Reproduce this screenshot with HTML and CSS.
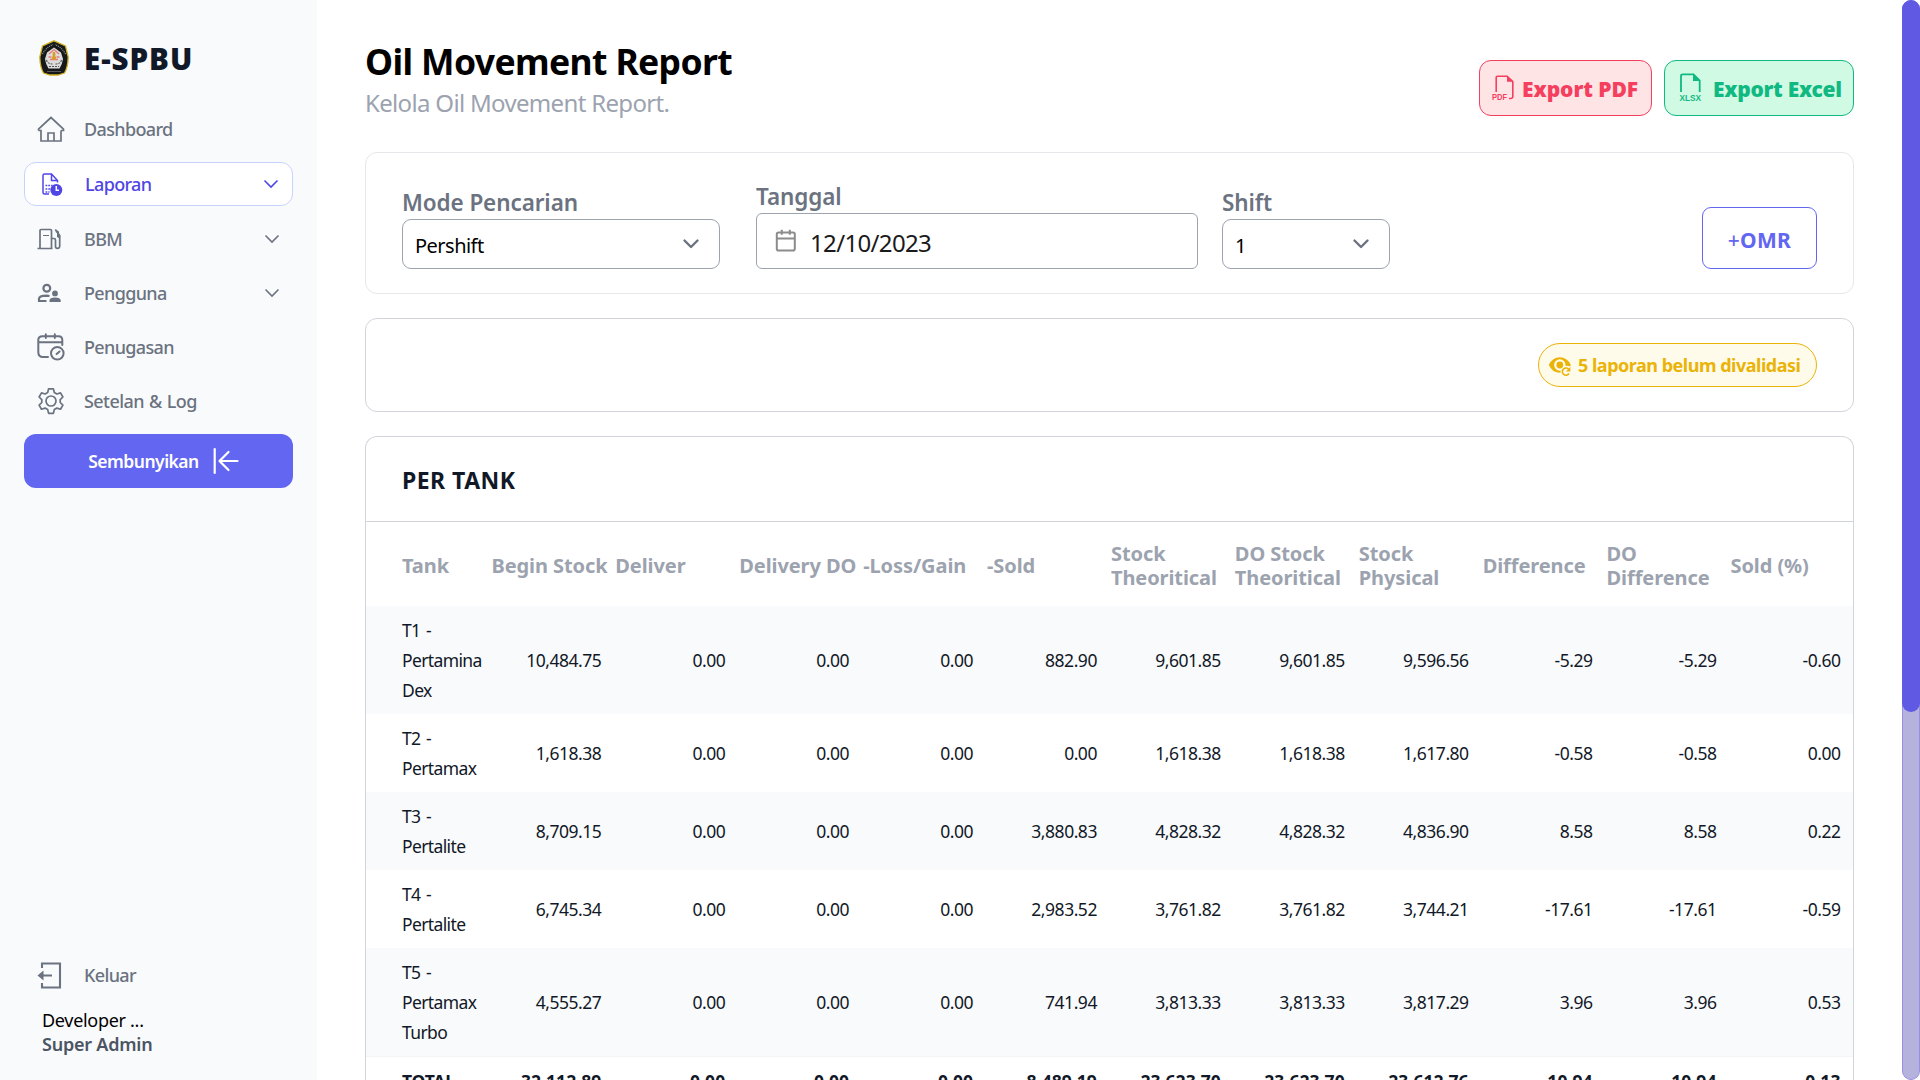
FILE: index.html
```
<!DOCTYPE html>
<html lang="id">
<head>
<meta charset="utf-8">
<title>Oil Movement Report</title>
<link rel="stylesheet" href="styles.css">
</head>
<body>
<aside class="sidebar">
  <div class="brand">
    <svg class="logo" width="30" height="36" viewBox="0 0 30 36"><path d="M15 .8 26.500 6 29.200 17Q29 27 25.500 33L19 35H11L4.500 33Q1 27 .8 17L3.500 6Z" fill="#17181a" stroke="#d0b022" stroke-width="1.300"/><path d="M15 7.500 22 12.500 24 19Q23 25 20.500 28.500H9.500Q7 25 6 19L8 12.500Z" fill="#dcdcdc"/><path d="M10 14 15 9.500 20 14M9.500 17h3M17.500 17h3M11 19.500h8" stroke="#e57d76" stroke-width="1.300" fill="none"/><path d="M15 12v8M13 18h4" stroke="#d89d28" stroke-width="2.600"/><path d="M7.500 20q1 4 6 4M22.500 20q-1 4-6 4M10 26.500h10" stroke="#555" stroke-width="1.100" fill="none" stroke-dasharray="2 1"/><path d="M3.500 14Q7 7.500 14 4.500M26.500 14Q23 7.500 16 4.500M8.500 31.500h13" stroke="#999" stroke-width="1.200" stroke-dasharray="1 1" fill="none"/></svg>
    <span class="brand-name">E-SPBU</span>
  </div>
  <nav class="menu">
    <a class="item"><svg class="ico" viewBox="0 0 30 30"><path d="M2.500 16.500V15L15 3.500 27.500 15v1.500h-2.500M2.500 16.500H5V27H25V16.500M12 27v-8h6v8"/></svg><span>Dashboard</span></a>
    <a class="item active"><svg class="ico" viewBox="0 0 30 30"><path d="M13 25H8.500Q7 25 7 23.500V6.500Q7 5 8.500 5H15.500L21.500 11.500V13.500M15.500 5v6.500h6" stroke-width="1.500"/><path d="M9.500 16.500h7M9.500 20h5M9.500 23h4" stroke-dasharray="1.800 1"/><circle cx="20.300" cy="21" r="6" class="solid"/><path d="M20.300 17v4.300H23" class="knock"/></svg><span>Laporan</span><svg class="chev" viewBox="0 0 16 10"><path d="M1.500 1.500 8 8l6.500-6.500"/></svg></a>
    <a class="item"><svg class="ico" viewBox="0 0 30 30"><path d="M1.500 24.500h15M4 24.500V6.500Q4 5.500 5 5.500H14.500Q15.500 5.500 15.500 6.500V24.500M15.500 14.500H18Q19.500 14.500 19.500 16V22.500Q19.500 24.300 21.500 24.300T23.700 22.500V11.500L19.300 5.500"/><path d="M7 11.500h6" stroke-width="1"/><path d="M20 7 22 8V12.500L24 13.500" stroke-width="2"/></svg><span>BBM</span><svg class="chev" viewBox="0 0 16 10"><path d="M1.500 1.500 8 8l6.500-6.500"/></svg></a>
    <a class="item"><svg class="ico" viewBox="0 0 30 30"><circle cx="10.800" cy="10.300" r="3.400" stroke-width="2.200"/><path d="M10.500 23H3V20.800Q3 17.600 10.800 17.600L13.500 18" stroke-width="2.200"/><circle cx="19" cy="15.400" r="2.900" class="solid"/><path d="M13.500 24V22.500Q13.500 19.500 19 19.500T24.700 22.500V24Z" class="solid"/></svg><span>Pengguna</span><svg class="chev" viewBox="0 0 16 10"><path d="M1.500 1.500 8 8l6.500-6.500"/></svg></a>
    <a class="item"><svg class="ico" viewBox="0 0 30 30"><g stroke-width="2" stroke-linecap="round"><path d="M12 25H7Q2.300 25 2.300 20V8Q2.300 4.200 6.500 4.200H22.500Q26.300 4.200 26.300 8V13M2.300 10.300H26M9.800 2.300V6M18.800 2.300V6"/><circle cx="21.300" cy="21.300" r="6.300"/><path d="M20.600 22 23.600 19.500"/></g></svg><span>Penugasan</span></a>
    <a class="item wide"><svg class="ico" viewBox="0 0 30 30"><circle cx="15" cy="15" r="5"/><path d="M12.600 2.800h4.800l.9 3.700 2.600 1.500 3.600-1.100 2.400 4.100-2.700 2.600v2.900l2.700 2.600-2.400 4.100-3.600-1.100-2.600 1.500-.9 3.700h-4.800l-.9-3.700-2.600-1.500-3.600 1.100-2.400-4.100 2.700-2.600v-2.900L3.100 11l2.400-4.100L9.100 8l2.600-1.500Z" stroke-linejoin="round"/></svg><span>Setelan &amp; Log</span></a>
    <button class="collapse"><span>Sembunyikan</span><svg width="28" height="28" viewBox="0 0 28 28"><path d="M2.700 2V26M25.500 14H8M16.500 5 7.500 14l9 9" fill="none" stroke="#fff" stroke-width="2.200" stroke-linecap="round" stroke-linejoin="round"/></svg></button>
  </nav>
  <div class="account">
    <a class="item"><svg class="ico" viewBox="0 0 30 30"><path d="M6 8V3.500H24V27.500H6V23M16 15.500H6" stroke-width="2.100"/><path d="M7.500 10.500v10L1.500 15.500Z" class="solid"/></svg><span>Keluar</span></a>
    <div class="user">Developer ...</div>
    <div class="role">Super Admin</div>
  </div>
</aside>
<main class="main">
  <header class="head">
    <div>
      <h1>Oil Movement Report</h1>
      <p>Kelola Oil Movement Report.</p>
    </div>
    <div class="exports">
      <button class="export pdf"><svg width="24" height="28" viewBox="0 0 24 28"><path d="M4.200 18V3.500Q4.200 2.200 5.500 2.200H15L20.800 7.500V22.500Q20.800 24.500 18.500 24.500H17" fill="none" stroke="currentColor" stroke-width="1.600"/><path d="M15 1.500 21.500 7.800H15Z" fill="currentColor"/><text x="0" y="25.500" textLength="15" lengthAdjust="spacingAndGlyphs" class="tag">PDF</text></svg><span>Export PDF</span></button>
      <button class="export xls"><svg width="24" height="30" viewBox="0 0 24 30"><path d="M2 20V4Q2 2.300 3.700 2.300H14.500L20.700 8.500V20" fill="none" stroke="currentColor" stroke-width="1.800"/><path d="M14 1.500 21.500 9H14Z" fill="currentColor"/><text x=".5" y="28.500" textLength="21.500" lengthAdjust="spacingAndGlyphs" class="tag">XLSX</text></svg><span>Export Excel</span></button>
    </div>
  </header>

  <section class="card filters">
    <label class="field mode"><span>Mode Pencarian</span>
      <span class="select">Pershift<svg width="18" height="12" viewBox="0 0 18 12"><path d="M2.500 2.500 9 9l6.500-6.500"/></svg></span></label>
    <label class="field date"><span>Tanggal</span>
      <span class="input"><svg width="22" height="24" viewBox="0 0 22 24"><rect x="1.800" y="3.500" width="18" height="18" rx="1.800"/><path d="M1.800 9.500h18M6.800.8v5M14.800.8v5"/></svg>12/10/2023</span></label>
    <label class="field shift"><span>Shift</span>
      <span class="select">1<svg width="18" height="12" viewBox="0 0 18 12"><path d="M2.500 2.500 9 9l6.500-6.500"/></svg></span></label>
    <button class="omr"><span class="plus">+</span>OMR</button>
  </section>

  <section class="card notice">
    <div class="pill"><svg width="24" height="22" viewBox="0 0 24 22"><path d="M.8 9Q4.500 1.300 11.800 1.300T22.800 9Q22.500 9.800 22 10.500 20 9.500 17.500 10V9A5.700 5.700 0 1 0 11.800 14.700L12.500 14.600V16.700Q4.500 17 .8 9Z" fill="currentColor"/><circle cx="11.800" cy="9" r="3.400" fill="currentColor"/><path d="M20.800 13.500A3.600 3.600 0 1 0 21 17.500" fill="none" stroke="currentColor" stroke-width="1.600"/><path d="M22.300 11V15.500H18Z" fill="currentColor"/></svg><span>5 laporan belum divalidasi</span></div>
  </section>

  <section class="card tank">
    <h2>PER TANK</h2>
    <table>
      <thead><tr><th>Tank</th><th>Begin Stock</th><th>Deliver</th><th>Delivery DO</th><th>-Loss/Gain</th><th>-Sold</th><th>Stock Theoritical</th><th>DO Stock Theoritical</th><th>Stock Physical</th><th>Difference</th><th>DO Difference</th><th>Sold (%)</th></tr></thead>
      <tbody>
        <tr><td>T1 - Pertamina Dex</td><td>10,484.75</td><td>0.00</td><td>0.00</td><td>0.00</td><td>882.90</td><td>9,601.85</td><td>9,601.85</td><td>9,596.56</td><td>-5.29</td><td>-5.29</td><td>-0.60</td></tr>
        <tr><td>T2 - Pertamax</td><td>1,618.38</td><td>0.00</td><td>0.00</td><td>0.00</td><td>0.00</td><td>1,618.38</td><td>1,618.38</td><td>1,617.80</td><td>-0.58</td><td>-0.58</td><td>0.00</td></tr>
        <tr><td>T3 - Pertalite</td><td>8,709.15</td><td>0.00</td><td>0.00</td><td>0.00</td><td>3,880.83</td><td>4,828.32</td><td>4,828.32</td><td>4,836.90</td><td>8.58</td><td>8.58</td><td>0.22</td></tr>
        <tr><td>T4 - Pertalite</td><td>6,745.34</td><td>0.00</td><td>0.00</td><td>0.00</td><td>2,983.52</td><td>3,761.82</td><td>3,761.82</td><td>3,744.21</td><td>-17.61</td><td>-17.61</td><td>-0.59</td></tr>
        <tr><td>T5 - Pertamax Turbo</td><td>4,555.27</td><td>0.00</td><td>0.00</td><td>0.00</td><td>741.94</td><td>3,813.33</td><td>3,813.33</td><td>3,817.29</td><td>3.96</td><td>3.96</td><td>0.53</td></tr>
        <tr class="total"><td>TOTAL</td><td>32,112.89</td><td>0.00</td><td>0.00</td><td>0.00</td><td>8,489.19</td><td>23,623.70</td><td>23,623.70</td><td>23,612.76</td><td>-10.94</td><td>-10.94</td><td>-0.13</td></tr>
      </tbody>
    </table>
  </section>
</main>
<div class="scroll"><div class="thumb"></div></div>
</body>
</html>
```
FILE: styles.css
```
* { box-sizing: border-box; }
html, body { height: 100%; }
body {
  margin: 0;
  display: flex;
  overflow: hidden;
  background: #fff;
  font-family: "Noto Sans", "Open Sans", sans-serif;
  font-size: 18px;
  color: #111827;
}
button { font-family: inherit; margin: 0; padding: 0; }

.sidebar {
  width: 317px;
  flex: none;
  background: #f9fafc;
  padding: 36px 24px 24px;
  display: flex;
  flex-direction: column;
}
.brand { display: flex; align-items: center; height: 44px; padding-left: 15px; margin-bottom: 28px; }
.logo { margin-top: -1px; }
.brand-name { margin-left: 15px; padding-top: 1px; font-size: 29.5px; font-weight: 900; letter-spacing: .95px; line-height: 44px; }
.menu { display: flex; flex-direction: column; gap: 12px; }
.item {
  display: flex;
  align-items: center;
  height: 42px;
  padding: 0 13px 0 12px;
  color: #6b7280;
  font-weight: 500;
  letter-spacing: -.64px;
}
.item span { margin-left: 18px; }
.item.wide { letter-spacing: -.58px; word-spacing: 1px; }
.item.active {
  height: 44px;
  padding: 0 13px 0 11px;
  background: #fff;
  border: 1px solid #c7d2fe;
  border-radius: 12px;
  color: #4f46e5;
}
.item.active span { margin-left: 19px; }
.ico { width: 30px; height: 30px; flex: none; fill: none; stroke: currentColor; stroke-width: 1.7; }
.solid { fill: currentColor; stroke: none; }
.knock { stroke: #fff; stroke-width: 1.5; }
.chev { width: 16px; height: 10px; margin-left: auto; fill: none; stroke: currentColor; stroke-width: 1.6; }
.collapse {
  height: 54px;
  border: 0;
  border-radius: 12px;
  background: #6366f1;
  color: #fff;
  display: flex;
  align-items: center;
  justify-content: center;
  gap: 13px;
  padding-left: 11px;
  font-size: 17.5px;
  font-weight: 600;
  letter-spacing: -.52px;
}
.account { margin-top: auto; }
.account .item { margin-bottom: 12px; }
.user, .role { padding-left: 18px; line-height: 24px; }
.user { color: #000; letter-spacing: -.3px; }
.role { color: #4b5563; font-weight: 600; letter-spacing: -.22px; }

.main { flex: 1; min-width: 0; padding: 38px 48px 0 48px; display: flex; flex-direction: column; overflow: hidden; }
.head { display: flex; flex: none; justify-content: space-between; height: 114px; }
.head h1 { margin: 0; font-size: 35.5px; line-height: 46px; font-weight: 700; color: #000; letter-spacing: -.62px; }
.head p { margin: 2px 0 0; font-size: 24px; line-height: 34px; color: #9ca3af; letter-spacing: -.67px; }
.exports { display: flex; gap: 12px; margin-top: 22px; }
.export {
  display: flex;
  align-items: center;
  height: 56px;
  border: 1px solid;
  border-radius: 12px;
  font-size: 21px;
  font-weight: 900;
}
.export svg { margin-left: 12px; }
.export span { padding-top: 2px; }
.pdf { width: 173px; background: #ffe4e6; color: #f43f5e; letter-spacing: -.05px; }
.pdf span { margin-left: 6px; }
.xls { width: 190px; background: #d1fae5; color: #10b981; letter-spacing: -.28px; }
.xls svg { margin: -3px 0 0 14px; }
.xls span { margin-left: 10px; }
.tag { font: 700 8.5px "Liberation Sans", sans-serif; fill: currentColor; letter-spacing: 0; }

.card { border: 1px solid #d1d5db; border-radius: 12px; flex: none; margin-bottom: 24px; }
.filters { display: flex; align-items: flex-end; height: 142px; padding: 0 36px 24px; border-color: #e5e7eb; }
.field { display: flex; flex-direction: column; }
.field > span:first-child { font-size: 22.5px; line-height: 32px; font-weight: 600; color: #6b7280; letter-spacing: -.1px; }
.mode { width: 318px; }
.date { width: 442px; margin-left: 36px; }
.shift { width: 168px; margin-left: 24px; }
.select, .input { display: flex; align-items: center; border: 1px solid #9ca3af; color: #000; }
.select { height: 50px; border-radius: 9px; padding: 2px 19px 0 12px; font-size: 20px; letter-spacing: -.52px; }
.select svg { margin: -3px 0 0 auto; fill: none; stroke: #6b7280; stroke-width: 2.4; stroke-linecap: round; stroke-linejoin: round; }
.input { height: 56px; border-radius: 6px; padding: 2px 19px 0 18px; font-size: 24px; letter-spacing: -.66px; color: #1a1a1a; }
.input svg { margin: -2px 13px 0 0; fill: none; stroke: #8c8c8c; stroke-width: 2; }
.omr {
  width: 115px;
  height: 62px;
  margin-left: auto;
  padding-top: 4px;
  border: 1px solid #6366f1;
  border-radius: 9px;
  background: #fff;
  color: #6366f1;
  font-size: 21px;
  font-weight: 700;
  letter-spacing: .3px;
}
.plus { font-weight: 500; }

.notice { height: 94px; display: flex; justify-content: flex-end; align-items: center; padding-right: 36px; }
.pill {
  display: flex;
  align-items: center;
  width: 279px;
  height: 44px;
  border: 1px solid #eab308;
  border-radius: 22px;
  background: #fffbeb;
  color: #eab308;
  font-weight: 700;
  letter-spacing: -.49px;
}
.pill svg { margin: 4px 6px 0 9px; }

.tank { flex: 1; min-height: 0; overflow: hidden; margin: 0; border-bottom: 0; border-radius: 12px 12px 0 0; }
.tank h2 { margin: 0; height: 85px; padding: 1px 36px 0; border-bottom: 1px solid #d1d5db; font-size: 23px; font-weight: 700; line-height: 84px; letter-spacing: .45px; }
table { width: 100%; table-layout: fixed; border-collapse: collapse; }
th { height: 84px; padding: 3px 0 0 1.5px; text-align: left; vertical-align: middle; font-size: 20px; font-weight: 700; line-height: 24px; color: #9ca3af; letter-spacing: -.08px; }
th:nth-child(4), th:nth-child(2) { white-space: nowrap; }
th:first-child { padding-left: 36px; }
td { padding: 9px 12.500px 9px 0; text-align: right; font-size: 17.5px; font-weight: 400; line-height: 30px; letter-spacing: -.48px; }
td:first-child { padding: 9px 0 9px 36px; text-align: left; letter-spacing: -.62px; word-spacing: 1.5px; }
tbody tr:nth-child(odd) { background: #f9fafc; }
tbody .total { border-top: 1px solid #f3f4f6; }
.total td { font-weight: 700; letter-spacing: .05px; }
.total td:first-child { letter-spacing: -.2px; }

.scroll { width: 18px; flex: none; border: 1px solid #978fe0; border-radius: 9px; background: #b6b2de; }
.thumb { width: 18px; height: 712px; margin: -1px; border-radius: 9px; background: #6059e4; }
```
